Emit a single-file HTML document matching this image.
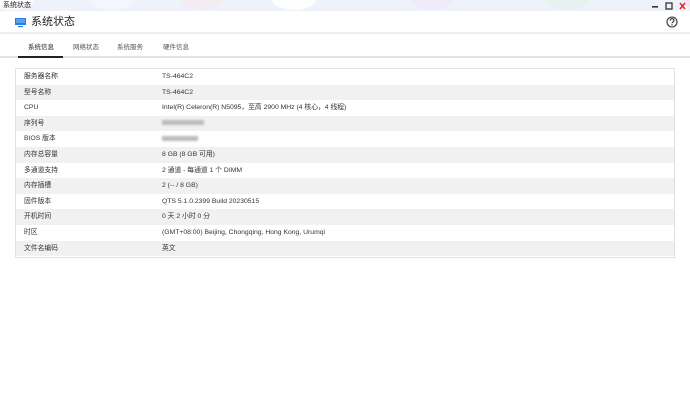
<!DOCTYPE html>
<html><head><meta charset="utf-8"><style>
*{margin:0;padding:0;box-sizing:border-box}
body{width:690px;height:401px;background:#fff;font-family:"Liberation Sans","Noto Sans CJK SC",sans-serif;color:#333;position:relative;overflow:hidden}
.top{position:absolute;left:0;top:0;width:690px;height:11px;background:#eef3fb;overflow:hidden}
.blob{position:absolute;top:-12px;width:44px;height:22px;border-radius:50%;opacity:.3}
.ttl{position:absolute;left:3px;top:0;font-size:7px;line-height:11px;color:#222}
.hdr{position:absolute;left:0;top:11px;width:690px;height:23px;border-bottom:2px solid #eee}
.hdr .t{position:absolute;left:31px;top:4px;font-size:11px;line-height:14px;color:#222}
.tabs{position:absolute;left:0;top:36px;width:690px;height:22px;border-bottom:2px solid #e4e4e4}
.tab{position:absolute;top:7px;font-size:6.5px;line-height:9px;color:#555}
.tab.a{color:#222}
.ul{position:absolute;left:18px;top:20px;width:45px;height:2px;background:#222}
.tbl{position:absolute;left:15px;top:68px;width:660px;height:190px;border:1px solid #e2e2e2}
.r{height:15.6px;line-height:15.6px;font-size:6.8px;position:relative;white-space:nowrap}
.r:nth-child(even){background:#f1f1f1}
.r span{position:absolute;top:0}
.k{left:8px}.v{left:146px}
.bl{display:inline-block;height:5px;background:#bbb;filter:blur(1px);vertical-align:middle}
</style></head><body>
<div class="top">
<div class="blob" style="left:-10px;background:#fff;opacity:.9"></div>
<div class="blob" style="left:90px;background:#fff"></div>
<div class="blob" style="left:180px;background:#fdd"></div>
<div class="blob" style="left:272px;background:#fff;opacity:.9"></div>
<div class="blob" style="left:410px;background:#f4d4ee"></div>
<div class="blob" style="left:545px;background:#d8f0d8"></div>
<div class="blob" style="left:682px;background:#fcd"></div>
<div class="ttl">系统状态</div>
<svg style="position:absolute;left:650px;top:2px" width="40" height="8"><rect x="2" y="4" width="6" height="1.6" fill="#333"/><rect x="16" y="1" width="6" height="6" fill="none" stroke="#333" stroke-width="1.3"/><path d="M30 1l5 6M35 1l-5 6" stroke="#e22" stroke-width="1.5"/></svg>
</div>
<div class="hdr">
<svg style="position:absolute;left:15px;top:7px" width="12" height="10"><rect x="0" y="0" width="11" height="7" fill="#2b7de0"/><rect x="1" y="1" width="9" height="4" fill="#5aa2f0"/><rect x="3" y="8" width="5" height="1.2" fill="#2b7de0"/></svg>
<div class="t">系统状态</div>
<svg style="position:absolute;left:666px;top:5px" width="12" height="12"><circle cx="6" cy="6" r="5" fill="none" stroke="#333" stroke-width="1.1"/><path d="M4.3 4.6a1.8 1.8 0 1 1 2.4 1.6c-.5.2-.7.5-.7 1.1" fill="none" stroke="#333" stroke-width="1.1"/><circle cx="6" cy="8.9" r=".7" fill="#333"/></svg>
</div>
<div class="tabs">
<div class="tab a" style="left:28px">系统信息</div>
<div class="tab" style="left:73px">网络状态</div>
<div class="tab" style="left:117px">系统服务</div>
<div class="tab" style="left:163px">硬件信息</div>
<div class="ul"></div>
</div>
<div class="tbl">
<div class="r"><span class="k">服务器名称</span><span class="v">TS-464C2</span></div>
<div class="r"><span class="k">型号名称</span><span class="v">TS-464C2</span></div>
<div class="r"><span class="k">CPU</span><span class="v">Intel(R) Celeron(R) N5095，至高 2900 MHz (4 核心，4 线程)</span></div>
<div class="r"><span class="k">序列号</span><span class="v"><span class="bl" style="width:42px;position:static"></span></span></div>
<div class="r"><span class="k">BIOS 版本</span><span class="v"><span class="bl" style="width:36px;position:static"></span></span></div>
<div class="r"><span class="k">内存总容量</span><span class="v">8 GB (8 GB 可用)</span></div>
<div class="r"><span class="k">多通道支持</span><span class="v">2 通道 - 每通道 1 个 DIMM</span></div>
<div class="r"><span class="k">内存插槽</span><span class="v">2 (-- / 8 GB)</span></div>
<div class="r"><span class="k">固件版本</span><span class="v">QTS 5.1.0.2399 Build 20230515</span></div>
<div class="r"><span class="k">开机时间</span><span class="v">0 天 2 小时 0 分</span></div>
<div class="r"><span class="k">时区</span><span class="v">(GMT+08:00) Beijing, Chongqing, Hong Kong, Urumqi</span></div>
<div class="r"><span class="k">文件名编码</span><span class="v">英文</span></div>
</div>
</body></html>
